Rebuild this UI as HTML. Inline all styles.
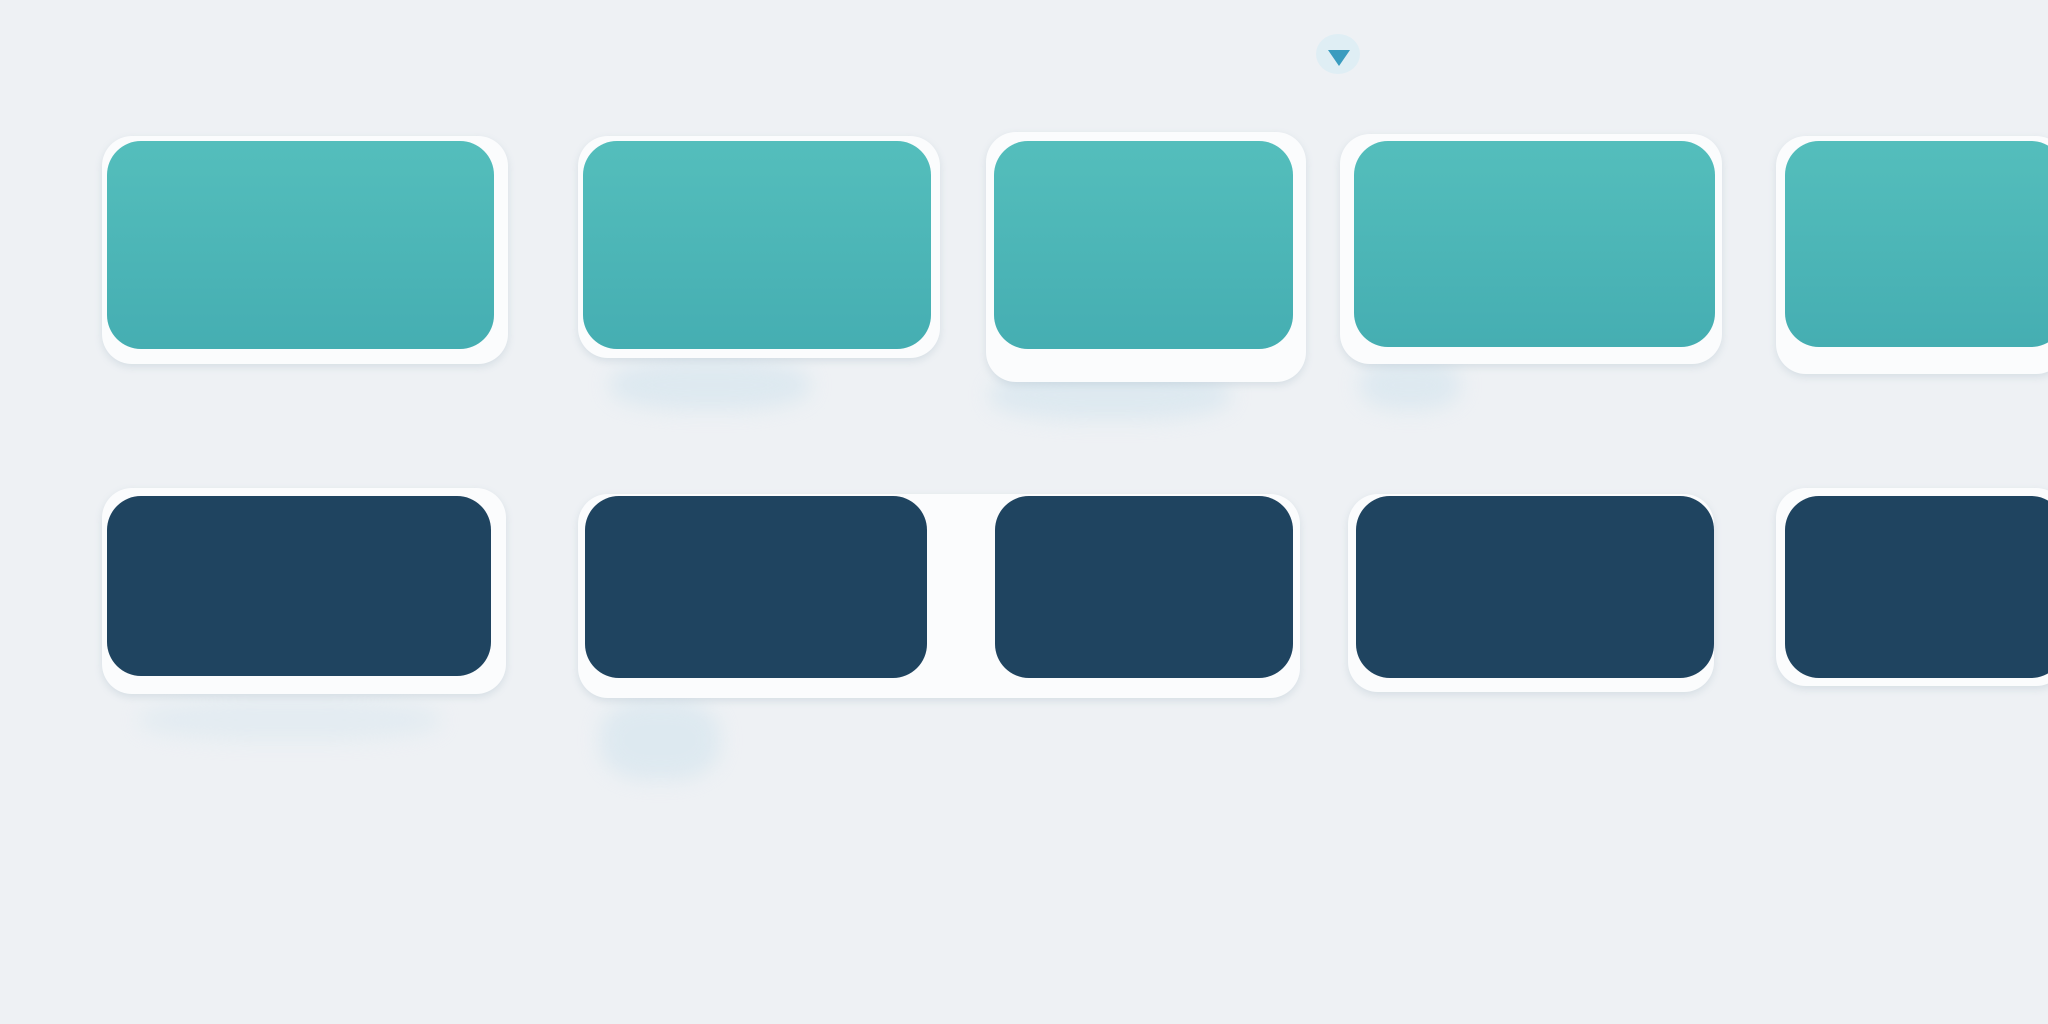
<!DOCTYPE html>
<html><head><meta charset="utf-8"><style>
html,body{margin:0;padding:0}
body{width:2048px;height:1024px;background:#eef1f4;position:relative;overflow:hidden;font-family:"Liberation Sans",sans-serif}
.f{position:absolute;background:#fbfcfd;border-radius:30px;box-shadow:0 3px 8px rgba(120,150,170,.2)}
.b{position:absolute;border-radius:34px}
.t{background:linear-gradient(180deg,#54bebc,#45aeb2)}
.d{background:#1f4460}
.s{position:absolute;background:#d3e4ee;border-radius:40%;filter:blur(10px);opacity:.6}
</style></head><body>
<div class="s" style="left:610px;top:360px;width:200px;height:50px"></div>
<div class="s" style="left:990px;top:370px;width:240px;height:50px"></div>
<div class="s" style="left:1360px;top:360px;width:100px;height:50px"></div>
<div class="s" style="left:600px;top:700px;width:120px;height:80px"></div>
<div class="s" style="left:140px;top:700px;width:300px;height:40px;opacity:.4"></div>

<div class="f" style="left:102px;top:136px;width:406px;height:228px"></div>
<div class="f" style="left:578px;top:136px;width:362px;height:222px"></div>
<div class="f" style="left:986px;top:132px;width:320px;height:250px"></div>
<div class="f" style="left:1340px;top:134px;width:382px;height:230px"></div>
<div class="f" style="left:1776px;top:136px;width:290px;height:238px"></div>

<div class="b t" style="left:107px;top:141px;width:387px;height:208px"></div>
<div class="b t" style="left:583px;top:141px;width:348px;height:208px"></div>
<div class="b t" style="left:994px;top:141px;width:299px;height:208px"></div>
<div class="b t" style="left:1354px;top:141px;width:361px;height:206px"></div>
<div class="b t" style="left:1785px;top:141px;width:280px;height:206px"></div>

<div class="f" style="left:102px;top:488px;width:404px;height:206px"></div>
<div class="f" style="left:578px;top:494px;width:722px;height:204px"></div>
<div class="f" style="left:1348px;top:494px;width:366px;height:198px"></div>
<div class="f" style="left:1776px;top:488px;width:290px;height:198px"></div>

<div class="b d" style="left:107px;top:496px;width:384px;height:180px"></div>
<div class="b d" style="left:585px;top:496px;width:342px;height:182px"></div>
<div class="b d" style="left:995px;top:496px;width:298px;height:182px"></div>
<div class="b d" style="left:1356px;top:496px;width:358px;height:182px"></div>
<div class="b d" style="left:1785px;top:496px;width:280px;height:182px"></div>

<div style="position:absolute;left:1316px;top:34px;width:44px;height:40px;background:#dfeef4;border-radius:50%"></div>
<svg style="position:absolute;left:1326px;top:46px" width="26" height="22"><polygon points="2,4 24,4 13,20" fill="#3a9cbf"/></svg>
</body></html>
